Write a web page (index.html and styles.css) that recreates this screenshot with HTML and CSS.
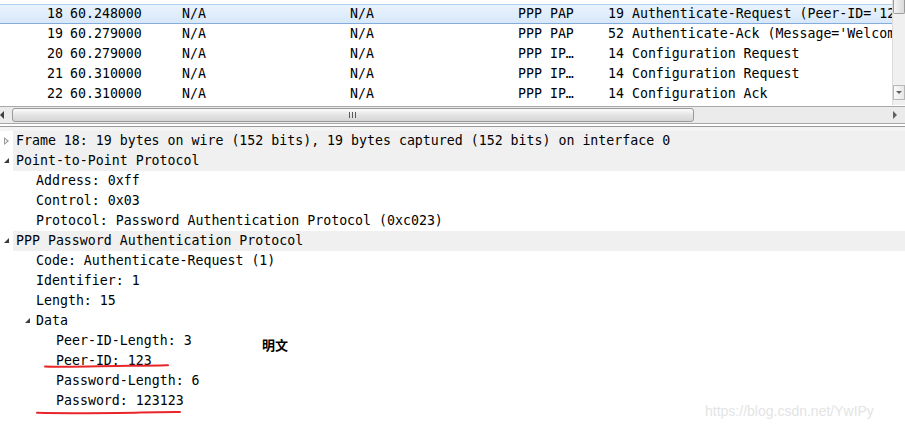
FILE: index.html
```html
<!DOCTYPE html>
<html lang="en">

<head>
    <meta charset="UTF-8">
    <title>PPP PAP capture</title>
    <link rel="stylesheet" href="styles.css">
</head>

<body>
    <div class="packets">
        <div class="list">
            <div class="row selected">
                <span class="no">18</span><span class="time">60.248000</span><span>N/A</span><span>N/A</span><span>PPP PAP</span><span>19 Authenticate-Request (Peer-ID='12</span>
            </div>
            <div class="row">
                <span class="no">19</span><span class="time">60.279000</span><span>N/A</span><span>N/A</span><span>PPP PAP</span><span>52 Authenticate-Ack (Message='Welcom</span>
            </div>
            <div class="row">
                <span class="no">20</span><span class="time">60.279000</span><span>N/A</span><span>N/A</span><span>PPP IP…</span><span>14 Configuration Request</span>
            </div>
            <div class="row">
                <span class="no">21</span><span class="time">60.310000</span><span>N/A</span><span>N/A</span><span>PPP IP…</span><span>14 Configuration Request</span>
            </div>
            <div class="row">
                <span class="no">22</span><span class="time">60.310000</span><span>N/A</span><span>N/A</span><span>PPP IP…</span><span>14 Configuration Ack</span>
            </div>
        </div>
        <div class="vscroll">
            <div class="vthumb"></div>
            <div class="vtrack"></div>
            <div class="vbtn"><span class="arrow-down"></span></div>
        </div>
    </div>

    <div class="hscroll">
        <div class="hbtn"><span class="arrow-left"></span></div>
        <div class="hthumb"><span class="grip"></span></div>
        <div class="htrack"></div>
        <div class="hbtn"><span class="arrow-right"></span></div>
    </div>

    <div class="splitter"></div>

    <div class="details">
        <div class="node top"><span class="toggle closed"></span><span class="label">Frame 18: 19 bytes on wire (152 bits), 19 bytes captured (152 bits) on interface 0</span></div>
        <div class="node top"><span class="toggle open"></span><span class="label">Point-to-Point Protocol</span></div>
        <div class="node lvl1">Address: 0xff</div>
        <div class="node lvl1">Control: 0x03</div>
        <div class="node lvl1">Protocol: Password Authentication Protocol (0xc023)</div>
        <div class="node top"><span class="toggle open"></span><span class="label">PPP Password Authentication Protocol</span></div>
        <div class="node lvl1">Code: Authenticate-Request (1)</div>
        <div class="node lvl1">Identifier: 1</div>
        <div class="node lvl1">Length: 15</div>
        <div class="node lvl1 parent"><span class="toggle open"></span>Data</div>
        <div class="node lvl2">Peer-ID-Length: 3</div>
        <div class="node lvl2">Peer-ID: 123</div>
        <div class="node lvl2">Password-Length: 6</div>
        <div class="node lvl2">Password: 123123</div>

        <!-- hand drawn notes on top of the screenshot -->
        <svg class="marks" width="905" height="301" viewBox="0 131 905 301">
            <path d="M45 366.5 C70 367.5 100 366 130 365.8 S160 365.5 168 365.2" />
            <path d="M37 412.8 C70 413.6 110 413 140 412.6 S172 412.2 180 412" />
        </svg>
        <div class="note">明文</div>
        <div class="watermark">https://blog.csdn.net/YwIPy</div>
    </div>
</body>

</html>
```

FILE: styles.css
```css
body {
    margin: 0;
    padding: 0;
    background-color: white;
    font-family: "DejaVu Sans Mono", "Liberation Mono", monospace;
    font-size: 13.25px;
    color: #000;
    width: 905px;
    height: 432px;
    overflow: hidden;
}

/* packet list */

.packets {
    display: flex;
    height: 105px;
    overflow: hidden;
}

.list {
    flex: 1;
    padding-top: 4px;
    overflow: hidden;
}

.row {
    display: grid;
    grid-template-columns: 63px 119px 168px 168px 90px 1fr;
    height: 20px;
    line-height: 20px;
    white-space: nowrap;
    box-sizing: border-box;
}

.row span {
    overflow: hidden;
}

.row .no {
    text-align: right;
}

.row .time {
    padding-left: 7px;
}

.row.selected {
    background: linear-gradient(#eaf3fc, #d7e8fa);
    border-top: 1px solid #b3d1f1;
    border-bottom: 1px solid #84acdd;
    line-height: 18px;
}

.vscroll {
    width: 12px;
    display: flex;
    flex-direction: column;
    background-color: #f0f0f0;
    border-left: 1px solid #dcdcdc;
}

.vthumb {
    height: 13px;
    background: linear-gradient(90deg, #f4f4f4, #dadada);
    border: 1px solid #9c9c9c;
    border-top: none;
    border-radius: 0 0 2px 2px;
}

.vtrack {
    flex: 1;
}

.vbtn {
    height: 13px;
    margin-bottom: 5px;
    border: 1px solid #b8b8b8;
    background: linear-gradient(90deg, #fafafa, #e6e6e6);
    display: flex;
    justify-content: center;
    align-items: center;
}

.arrow-down {
    width: 0;
    height: 0;
    border-left: 3px solid transparent;
    border-right: 3px solid transparent;
    border-top: 3px solid #606060;
}

/* horizontal scrollbar */

.hscroll {
    display: flex;
    height: 16px;
    margin-top: 1px;
    border-top: 1px solid #a8a8a8;
    border-bottom: 1px solid #a8a8a8;
    background-color: #ebebeb;
    box-sizing: content-box;
}

.hbtn {
    width: 12px;
    display: flex;
    align-items: center;
    justify-content: center;
}

.arrow-left {
    width: 0;
    height: 0;
    border-top: 4px solid transparent;
    border-bottom: 4px solid transparent;
    border-right: 4px solid #404040;
    margin-right: 8px;
}

.arrow-right {
    width: 0;
    height: 0;
    border-top: 4px solid transparent;
    border-bottom: 4px solid transparent;
    border-left: 4px solid #606060;
}

.hthumb {
    width: 682px;
    margin: 1px 0;
    border: 1px solid #9a9a9a;
    border-radius: 3px;
    background: linear-gradient(#fbfbfb, #e4e4e4 50%, #d6d6d6);
    display: flex;
    align-items: center;
    padding-left: 336px;
    box-sizing: border-box;
}

.grip {
    width: 7px;
    height: 6px;
    background: repeating-linear-gradient(90deg, #5a5a5a 0 1px, transparent 1px 3px);
}

.htrack {
    flex: 1;
}

.hscroll .hbtn:last-child {
    width: 20px;
}

.splitter {
    height: 4px;
    margin-top: 2px;
    border-top: 1px solid #9a9a9a;
    background-color: #f4f4f4;
}

/* packet details */

.details {
    position: relative;
    height: 301px;
}

.node {
    height: 20px;
    line-height: 20px;
    white-space: nowrap;
    display: flex;
    align-items: center;
}

.node.top .label {
    flex: 1;
    padding-left: 3px;
    background-color: #f0f0f0;
    line-height: 20px;
}

.node.lvl1 {
    padding-left: 36px;
}

.node.lvl1.parent {
    padding-left: 21px;
}

.node.lvl2 {
    padding-left: 56px;
}

.toggle {
    width: 10px;
    height: 10px;
    margin-left: 3px;
    position: relative;
    flex: none;
}

.toggle.closed::before {
    content: "";
    position: absolute;
    left: 1px;
    top: 1px;
    width: 0;
    height: 0;
    border-top: 4px solid transparent;
    border-bottom: 4px solid transparent;
    border-left: 5px solid #9a9a9a;
}

.toggle.closed::after {
    content: "";
    position: absolute;
    left: 2px;
    top: 3px;
    width: 0;
    height: 0;
    border-top: 2px solid transparent;
    border-bottom: 2px solid transparent;
    border-left: 2.5px solid #fff;
}

.toggle.open::before {
    content: "";
    position: absolute;
    left: 1px;
    top: 2px;
    width: 0;
    height: 0;
    border-left: 5px solid transparent;
    border-bottom: 5px solid #3c3c3c;
}

.parent .toggle {
    margin-right: 2px;
}

.marks {
    position: absolute;
    left: 0;
    top: 0;
    pointer-events: none;
}

.marks path {
    fill: none;
    stroke: #e8262a;
    stroke-width: 2;
    stroke-linecap: round;
}

.note {
    position: absolute;
    left: 262px;
    top: 205px;
    font-family: "Noto Sans CJK SC", sans-serif;
    font-weight: bold;
    font-size: 13px;
    line-height: 18px;
}

.watermark {
    position: absolute;
    left: 705px;
    top: 272px;
    font-family: "Liberation Sans", Arial, sans-serif;
    font-size: 14px;
    color: #e4e4e4;
}
```
